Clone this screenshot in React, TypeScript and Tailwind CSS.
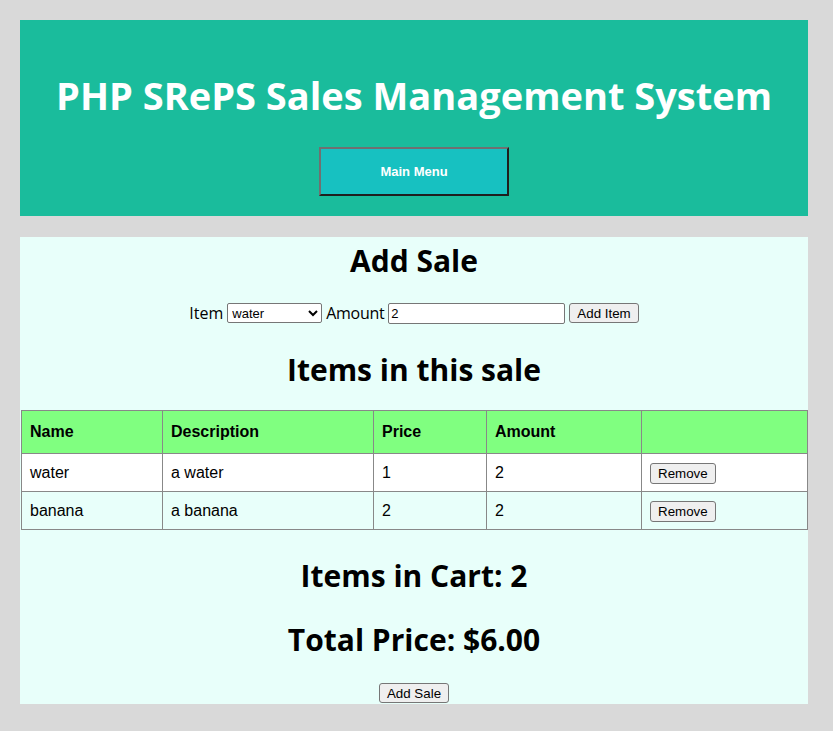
import React from "react";

const rows = [
  { name: "water", description: "a water", price: "1", amount: "2" },
  { name: "banana", description: "a banana", price: "2", amount: "2" },
];

const heading = "font-['Open_Sans','Noto_Sans',sans-serif] font-bold text-black";
const nativeBtn =
  "rounded-[3px] border border-[#767676] bg-[#efefef] px-[7px] text-[13.33px] leading-[17px] text-black font-['Liberation_Sans',Arial,sans-serif]";

export default function App() {
  return (
    <div className="min-h-[731px] bg-[#d9d9d9] pl-[20px] pt-[20px] font-['Liberation_Sans',Arial,sans-serif]">
      <header className="flex h-[196px] w-[788px] flex-col items-center bg-[#1abc9c]">
        <h1 className={`${heading} mt-[51px] text-[38px] leading-[48px] text-white`}>
          PHP SRePS Sales Management System
        </h1>
        <button
          type="button"
          className="mt-[28px] h-[49px] w-[190px] border-2 border-t-[#707070] border-l-[#707070] border-b-[#1f1f1f] border-r-[#1f1f1f] bg-[#17c1c1] text-[13px] font-bold text-white"
        >
          Main Menu
        </button>
      </header>

      <main className="mt-[21px] flex h-[467px] w-[788px] flex-col items-center bg-[#e8fffa]">
        <h2 className={`${heading} mt-[4px] text-[30px] leading-[40px]`}>Add Sale</h2>

        <form className="mt-[20px] flex items-center gap-[4px] text-[16px] font-['Open_Sans','Noto_Sans',sans-serif]">
          <span>Item</span>
          <select className="h-[20px] w-[95px] rounded-[2px] border border-[#767676] bg-white text-[13px] font-['Liberation_Sans',Arial,sans-serif]">
            <option>water</option>
            <option>banana</option>
          </select>
          <span className="tracking-[-0.3px]">Amount</span>
          <input
            defaultValue="2"
            className="h-[21px] w-[177px] rounded-[2px] border border-[#767676] bg-white px-[2px] text-[13px] font-['Liberation_Sans',Arial,sans-serif]"
          />
          <button type="button" className={`${nativeBtn} h-[20px]`}>
            Add Item
          </button>
        </form>

        <h2 className={`${heading} mt-[25px] text-[30px] leading-[40px]`}>Items in this sale</h2>

        <table className="mt-[20px] w-[787px] self-start ml-[1px] border-collapse text-[16px] text-black">
          <thead>
            <tr className="h-[43px] bg-[#80ff80] text-left">
              <th className="w-[141px] border border-[#888] px-[8px] font-bold">Name</th>
              <th className="w-[211px] border border-[#888] px-[8px] font-bold">Description</th>
              <th className="w-[113px] border border-[#888] px-[8px] font-bold">Price</th>
              <th className="w-[155px] border border-[#888] px-[8px] font-bold">Amount</th>
              <th className="border border-[#888] px-[8px]"></th>
            </tr>
          </thead>
          <tbody>
            {rows.map((r, i) => (
              <tr key={r.name} className={`h-[38px] ${i % 2 === 0 ? "bg-white" : "bg-[#e8fffa]"}`}>
                <td className="border border-[#888] px-[8px]">{r.name}</td>
                <td className="border border-[#888] px-[8px]">{r.description}</td>
                <td className="border border-[#888] px-[8px]">{r.price}</td>
                <td className="border border-[#888] px-[8px]">{r.amount}</td>
                <td className="border border-[#888] px-[8px]">
                  <button type="button" className={`${nativeBtn} h-[21px]`}>
                    Remove
                  </button>
                </td>
              </tr>
            ))}
          </tbody>
        </table>

        <h2 className={`${heading} mt-[26px] text-[30px] leading-[40px]`}>Items in Cart: 2</h2>
        <h2 className={`${heading} mt-[24px] text-[30px] leading-[40px]`}>Total Price: $6.00</h2>

        <button type="button" className={`${nativeBtn} mt-[23px] h-[20px]`}>
          Add Sale
        </button>
      </main>
    </div>
  );
}
